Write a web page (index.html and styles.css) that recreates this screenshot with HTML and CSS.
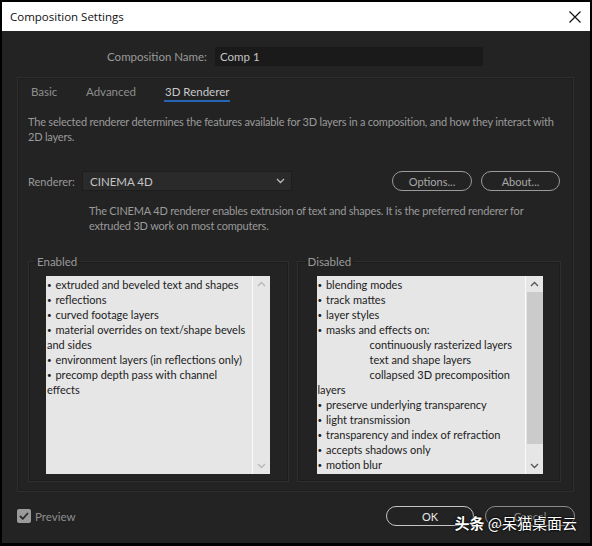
FILE: index.html
```html
<!DOCTYPE html>
<html lang="en">
<head>
    <meta charset="UTF-8">
    <title>Composition Settings</title>
    <link rel="stylesheet" href="styles.css">
</head>
<body>
<div class="window">
    <div class="titlebar">
        <span>Composition Settings</span>
        <svg class="close" width="12" height="12" viewBox="0 0 12 12"><path d="M0.5 0.5 L11.5 11.5 M11.5 0.5 L0.5 11.5" stroke="#111" stroke-width="1.2" fill="none"/></svg>
    </div>

    <div class="name-row">
        <label>Composition Name:</label>
        <div class="name-input">Comp 1</div>
    </div>

    <div class="panel">
        <div class="tabs">
            <span class="tab basic">Basic</span>
            <span class="tab adv">Advanced</span>
            <span class="tab active">3D Renderer</span>
        </div>

        <p class="desc">The selected renderer determines the features available for 3D layers in a composition, and how they interact with 2D layers.</p>

        <div class="renderer-row">
            <label>Renderer:</label>
            <div class="select">
                <span>CINEMA 4D</span>
                <svg width="9" height="6" viewBox="0 0 9 6"><path d="M1 1 L4.5 4.5 L8 1" stroke="#bbb" stroke-width="1.3" fill="none"/></svg>
            </div>
            <button class="pill opt">Options...</button>
            <button class="pill about">About...</button>
        </div>

        <p class="desc indent">The CINEMA 4D renderer enables extrusion of text and shapes. It is the preferred renderer for extruded 3D work on most computers.</p>

        <div class="groups">
            <fieldset class="group">
                <legend>Enabled</legend>
                <div class="list">
                    <div class="items">
                        <div><b>•</b> extruded and beveled text and shapes</div>
                        <div><b>•</b> reflections</div>
                        <div><b>•</b> curved footage layers</div>
                        <div><b>•</b> material overrides on text/shape bevels and sides</div>
                        <div><b>•</b> environment layers (in reflections only)</div>
                        <div><b>•</b> precomp depth pass with channel effects</div>
                    </div>
                    <div class="scroll">
                        <svg class="up" width="9" height="6" viewBox="0 0 9 6"><path d="M1 5 L4.5 1.5 L8 5" stroke="#b8b8b8" stroke-width="1.3" fill="none"/></svg>
                        <svg class="down" width="9" height="6" viewBox="0 0 9 6"><path d="M1 1 L4.5 4.5 L8 1" stroke="#b8b8b8" stroke-width="1.3" fill="none"/></svg>
                    </div>
                </div>
            </fieldset>

            <fieldset class="group right">
                <legend>Disabled</legend>
                <div class="list">
                    <div class="items">
                        <div><b>•</b> blending modes</div>
                        <div><b>•</b> track mattes</div>
                        <div><b>•</b> layer styles</div>
                        <div><b>•</b> masks and effects on:</div>
                        <div><span class="gap"></span>continuously rasterized layers</div>
                        <div><span class="gap"></span>text and shape layers</div>
                        <div><span class="gap"></span>collapsed 3D precomposition layers</div>
                        <div><b>•</b> preserve underlying transparency</div>
                        <div><b>•</b> light transmission</div>
                        <div><b>•</b> transparency and index of refraction</div>
                        <div><b>•</b> accepts shadows only</div>
                        <div><b>•</b> motion blur</div>
                    </div>
                    <div class="scroll">
                        <svg class="up" width="9" height="6" viewBox="0 0 9 6"><path d="M1 5 L4.5 1.5 L8 5" stroke="#555" stroke-width="1.3" fill="none"/></svg>
                        <div class="thumb"></div>
                        <svg class="down" width="9" height="6" viewBox="0 0 9 6"><path d="M1 1 L4.5 4.5 L8 1" stroke="#555" stroke-width="1.3" fill="none"/></svg>
                    </div>
                </div>
            </fieldset>
        </div>
    </div>

    <div class="footer">
        <label class="check">
            <span class="box">
                <svg width="10" height="8" viewBox="0 0 10 8"><path d="M1 4 L3.8 6.8 L9 1" stroke="#2a2a2a" stroke-width="1.8" fill="none"/></svg>
            </span>
            Preview
        </label>
        <div class="buttons">
            <button class="pill ok">OK</button>
            <button class="pill cancel">Cancel</button>
        </div>
    </div>

    <div class="watermark"><strong>头条</strong> @呆猫桌面云</div>
</div>
</body>
</html>
```

FILE: styles.css
```css
body {
    margin: 0;
    background: #000;
    font-family: Lato, "Noto Sans", sans-serif;
}
.window {
    position: relative;
    width: 592px;
    height: 546px;
    box-sizing: border-box;
    border: 2px solid #000;
    border-bottom-width: 3px;
    background: #232323;
    display: flex;
    flex-direction: column;
    color: #9c9c9c;
    font-size: 11px;
}
.titlebar {
    height: 29px;
    background: #fff;
    color: #111;
    font-family: "Open Sans", sans-serif;
    font-size: 11.5px;
    display: flex;
    align-items: center;
    justify-content: space-between;
    padding: 0 9px 0 8px;
}

.name-row { display: flex; align-items: center; margin-top: 16px; height: 19px; }
.name-row label { width: 205px; text-align: right; color: #9a9a9a; font-size: 11.5px; }
.name-input {
    margin-left: 8px;
    width: 268px;
    height: 19px;
    box-sizing: border-box;
    background: #1a1a1a;
    color: #c4c4c4;
    padding: 2px 5px;
    line-height: 15px;
    font-size: 11.5px;
}

.panel {
    margin: 11px 16px 0 15px;
    height: 415px;
    box-sizing: border-box;
    border: 1px solid #2e2e2e;
    box-shadow: inset 0 0 0 1px #1e1e1e;
    padding: 0 12px 0 10px;
    display: flex;
    flex-direction: column;
}
.tabs { display: flex; margin-top: 6px; padding-left: 3px; height: 18px; }
.tab { color: #8e8e8e; line-height: 16px; font-size: 11.5px; }
.tab.basic { width: 55px; }
.tab.adv { width: 78px; }
.tab.active { color: #c8c8c8; border-bottom: 2px solid #2466b3; padding: 0 1px; }

.desc { margin: 12px 0 0; line-height: 15px; color: #9a9a9a; letter-spacing: -0.2px; }
.desc.indent { margin: 12px 0 0 61px; }

.renderer-row { display: flex; align-items: center; margin-top: 27px; height: 20px; }
.renderer-row label { width: 54px; color: #9a9a9a; }
.select {
    width: 210px;
    height: 20px;
    box-sizing: border-box;
    background: #2a2a2a;
    border: 1px solid #1d1d1d;
    display: flex;
    align-items: center;
    justify-content: space-between;
    padding: 0 6px 0 7px;
    color: #c4c4c4;
    font-size: 11.5px;
}
.pill {
    font-family: inherit;
    font-size: 11px;
    height: 20px;
    background: transparent;
    border: 1px solid #9a9a9a;
    border-radius: 10px;
    color: #a8a8a8;
    padding: 0;
}
.opt { margin-left: 100px; width: 80px; }
.about { margin-left: 9px; width: 79px; }

.groups { display: flex; margin-top: 22px; gap: 8px; }
.group {
    margin: 0;
    height: 227px;
    box-sizing: border-box;
    border: 1px solid #2f2f2f;
    box-shadow: inset 0 0 0 1px #1c1c1c;
    padding: 8px 18px 0 17px;
    width: 261px;
}
.group.right { width: 265px; padding: 8px 17px 0 19px; }
.group legend { padding: 0 3px; margin-left: -12px; color: #9a9a9a; font-size: 11.5px; }
.list {
    height: 198px;
    background: #e6e6e6;
    display: flex;
}
.items {
    flex: 1;
    color: #1c1c1c;
    font-size: 11px;
    line-height: 15px;
    padding-top: 1px;
    padding-left: 1px;
}
.items b { font-weight: normal; font-size: 8px; line-height: 0; vertical-align: 1px; margin-right: 1px; }
.gap { display: inline-block; width: 52px; }
.scroll {
    width: 18px;
    border-left: 1px solid #fafafa;
    display: flex;
    flex-direction: column;
    align-items: center;
    padding: 5px 0;
    box-sizing: border-box;
}
.scroll .down { margin-top: auto; }
.thumb { width: 16px; background: #cbcbcb; height: 152px; margin-top: 5px; }

.footer {
    display: flex;
    justify-content: space-between;
    align-items: center;
    margin-top: 14px;
    padding: 0 15px;
    height: 20px;
}
.check { display: flex; align-items: center; color: #8e8e8e; font-size: 11.5px; }
.box {
    width: 14px;
    height: 14px;
    background: #9a9a9a;
    border-radius: 2px;
    display: flex;
    align-items: center;
    justify-content: center;
    margin-right: 4px;
}
.buttons { display: flex; gap: 11px; }
.ok { width: 88px; color: #e8e8e8; border-color: #c4c4c4; }
.cancel { width: 90px; color: #8a8a8a; border-color: #8a8a8a; }

.watermark {
    position: absolute;
    right: 13px;
    bottom: 10px;
    font-family: "Noto Sans CJK SC", sans-serif;
    font-size: 15px;
    color: #fff;
    text-shadow: 0 0 2px #000, 0 0 2px #000;
}
```
